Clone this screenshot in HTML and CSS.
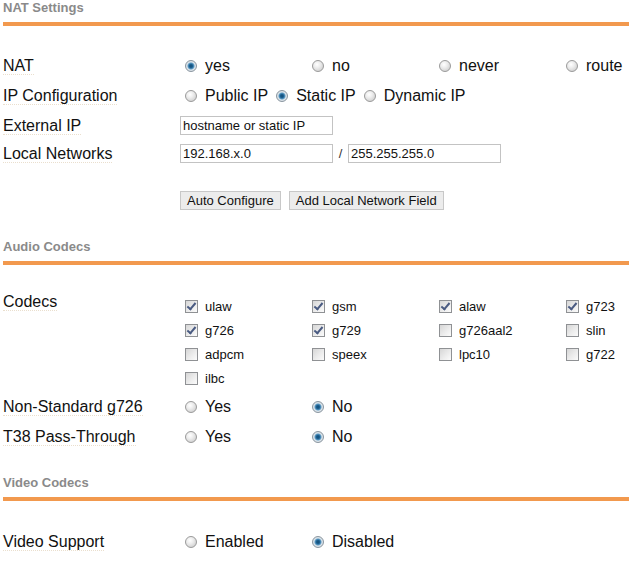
FILE: index.html
```html
<!DOCTYPE html>
<html lang="en">
<head>
  <meta charset="UTF-8">
  <title>SIP Settings</title>
  <link rel="stylesheet" href="styles.css">
</head>
<body>
  <main class="page">
    <section class="panel panel-nat">
      <h3 class="panel-title">NAT Settings</h3>
      <div class="fields">
        <div class="field field-radio">
          <div class="field-label"><span>NAT</span></div>
          <div class="choices">
            <label class="opt"><input type="radio" name="nat" checked>yes</label>
            <label class="opt"><input type="radio" name="nat">no</label>
            <label class="opt"><input type="radio" name="nat">never</label>
            <label class="opt"><input type="radio" name="nat">route</label>
          </div>
        </div>
        <div class="field field-radio">
          <div class="field-label"><span>IP Configuration</span></div>
          <div class="inline-choices">
            <label class="opt"><input type="radio" name="ipconf">Public IP</label>
            <label class="opt"><input type="radio" name="ipconf" checked>Static IP</label>
            <label class="opt"><input type="radio" name="ipconf">Dynamic IP</label>
          </div>
        </div>
        <div class="field">
          <div class="field-label"><span>External IP</span></div>
          <div class="inputs">
            <input class="textbox" type="text" value="hostname or static IP">
          </div>
        </div>
        <div class="field">
          <div class="field-label"><span>Local Networks</span></div>
          <div class="inputs">
            <input class="textbox" type="text" value="192.168.x.0">
            <span class="slash">/</span>
            <input class="textbox" type="text" value="255.255.255.0">
          </div>
        </div>
        <div class="field field-buttons">
          <div class="field-label"></div>
          <div class="inputs">
            <button class="btn" type="button">Auto Configure</button>
            <button class="btn" type="button">Add Local Network Field</button>
          </div>
        </div>
      </div>
    </section>

    <section class="panel panel-audio">
      <h3 class="panel-title">Audio Codecs</h3>
      <div class="fields">
        <div class="field field-codecs">
          <div class="field-label"><span>Codecs</span></div>
          <div class="codecs">
            <label class="codec"><input type="checkbox" checked>ulaw</label>
            <label class="codec"><input type="checkbox" checked>gsm</label>
            <label class="codec"><input type="checkbox" checked>alaw</label>
            <label class="codec"><input type="checkbox" checked>g723</label>
            <label class="codec"><input type="checkbox" checked>g726</label>
            <label class="codec"><input type="checkbox" checked>g729</label>
            <label class="codec"><input type="checkbox">g726aal2</label>
            <label class="codec"><input type="checkbox">slin</label>
            <label class="codec"><input type="checkbox">adpcm</label>
            <label class="codec"><input type="checkbox">speex</label>
            <label class="codec"><input type="checkbox">lpc10</label>
            <label class="codec"><input type="checkbox">g722</label>
            <label class="codec"><input type="checkbox">ilbc</label>
          </div>
        </div>
        <div class="field field-radio field-gap">
          <div class="field-label"><span>Non-Standard g726</span></div>
          <div class="choices">
            <label class="opt"><input type="radio" name="g726">Yes</label>
            <label class="opt"><input type="radio" name="g726" checked>No</label>
          </div>
        </div>
        <div class="field field-radio">
          <div class="field-label"><span>T38 Pass-Through</span></div>
          <div class="choices">
            <label class="opt"><input type="radio" name="t38">Yes</label>
            <label class="opt"><input type="radio" name="t38" checked>No</label>
          </div>
        </div>
      </div>
    </section>

    <section class="panel panel-video">
      <h3 class="panel-title">Video Codecs</h3>
      <div class="fields">
        <div class="field field-radio">
          <div class="field-label"><span>Video Support</span></div>
          <div class="choices">
            <label class="opt"><input type="radio" name="video">Enabled</label>
            <label class="opt"><input type="radio" name="video" checked>Disabled</label>
          </div>
        </div>
      </div>
    </section>
  </main>
</body>
</html>
```

FILE: styles.css
```css
body {
  margin: 0;
  background: #fff;
  color: #111;
  font-family: "Liberation Sans", Arial, sans-serif;
}
.page {
  padding-left: 3px;
}
.panel-title {
  margin: 0;
  padding-bottom: 6px;
  font-size: 13px;
  line-height: 16px;
  font-weight: bold;
  color: #8a8a8a;
  border-bottom: 4px solid #f2994e;
}
.panel-nat {
  margin-bottom: 29px;
}
.panel-audio {
  margin-bottom: 18px;
}
.fields {
  margin-top: 30px;
}
.panel-audio .fields {
  margin-top: 27px;
}
.panel-video .fields {
  margin-top: 31px;
}
.field {
  display: flex;
  align-items: flex-start;
  min-height: 28px;
}
.field-radio {
  min-height: 30px;
}
.field-gap {
  margin-top: 7px;
}
.field-buttons {
  min-height: 19px;
  margin-top: 19px;
}
.field-label {
  width: 177px;
  flex: none;
  font-size: 16px;
  line-height: 20px;
}
.field-label span {
  border-bottom: 1px dotted #eadfce;
}
.choices {
  display: grid;
  grid-template-columns: repeat(3, 127px) auto;
  padding-left: 5px;
}
.inline-choices {
  display: flex;
  gap: 8px;
  padding-left: 5px;
}
.opt {
  display: flex;
  align-items: center;
  gap: 8px;
  font-size: 16px;
  line-height: 20px;
  white-space: nowrap;
}
.opt input {
  appearance: none;
  -webkit-appearance: none;
  flex: none;
  box-sizing: border-box;
  width: 12px;
  height: 12px;
  margin: 0;
  border: 1px solid #9a9a9a;
  border-radius: 50%;
  background: radial-gradient(circle at 40% 35%, #ffffff 0, #eeeeee 35%, #c4c4c4 100%);
}
.opt input:checked {
  border-color: #8a96a0;
  background: radial-gradient(circle, #134a72 0, #1d6394 1.8px, #5f9bc4 3px, #dde6ec 4px, #c9cdd1 100%);
}
.inputs {
  display: flex;
  align-items: center;
}
.textbox {
  box-sizing: border-box;
  width: 153px;
  height: 19px;
  margin: 0;
  padding: 0 2px;
  border: 1px solid #c3c3c3;
  font-family: "Liberation Sans", Arial, sans-serif;
  font-size: 13px;
  color: #111;
  background: #fff;
}
.slash {
  width: 15px;
  text-align: center;
  font-size: 13px;
  color: #333;
}
.btn {
  box-sizing: border-box;
  height: 19px;
  margin: 0 8px 0 0;
  padding: 0 6px;
  border: 1px solid #c8c8c8;
  background: #ececec;
  font-family: "Liberation Sans", Arial, sans-serif;
  font-size: 13px;
  color: #111;
}
.codecs {
  display: grid;
  grid-template-columns: repeat(3, 127px) auto;
  grid-auto-rows: 24px;
  margin-top: 2px;
  padding-left: 5px;
}
.codec {
  display: flex;
  align-items: center;
  gap: 7px;
  font-size: 13px;
}
.codec input {
  appearance: none;
  -webkit-appearance: none;
  position: relative;
  flex: none;
  width: 13px;
  height: 13px;
  margin: 0;
  border: 1px solid #8f9194;
  background: linear-gradient(135deg, #d6d6d6 0, #ececec 55%, #fbfbfb 100%);
}
.codec input:checked::after {
  content: "";
  position: absolute;
  left: 3px;
  top: 0;
  width: 3px;
  height: 7px;
  border: solid #4a5b82;
  border-width: 0 2px 2px 0;
  transform: rotate(40deg);
}
```
